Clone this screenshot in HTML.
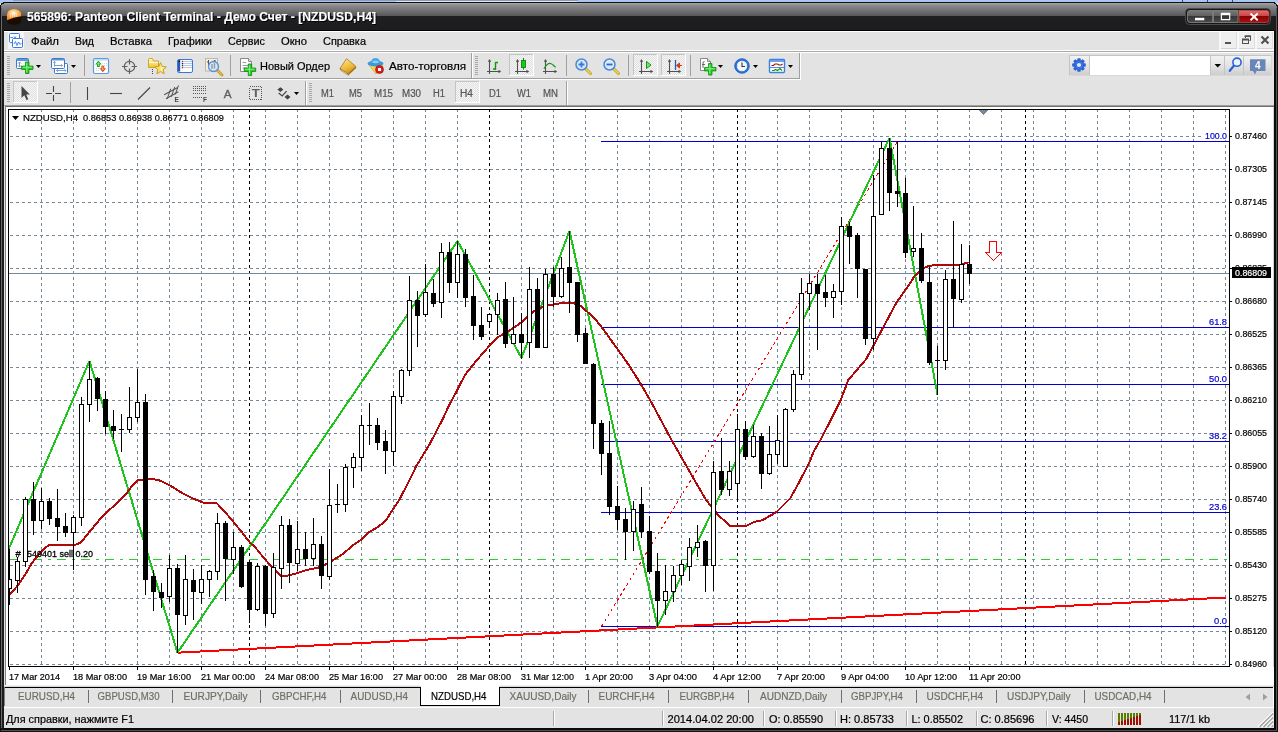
<!DOCTYPE html>
<html lang="ru"><head><meta charset="utf-8"><title>565896: Panteon Client Terminal - Демо Счет - [NZDUSD,H4]</title>
<style>
html,body{margin:0;padding:0;background:#e3e3e3;overflow:hidden}
body{width:1278px;height:732px;position:relative;font-family:'Liberation Sans', sans-serif}
svg{display:block;position:absolute;left:0;top:0;will-change:transform}
text{font-family:'Liberation Sans', sans-serif;white-space:pre}
</style></head>
<body>
<svg id="app" width="1278" height="732" viewBox="0 0 1278 732" font-family="'Liberation Sans', sans-serif" shape-rendering="crispEdges">
<g id="titlebar">
<defs>
<linearGradient id="tg" x1="0" y1="0" x2="0" y2="1"><stop offset="0" stop-color="#a8a8a8"/><stop offset="0.08" stop-color="#8c8c8e"/><stop offset="0.46" stop-color="#58585a"/><stop offset="0.461" stop-color="#1f1f21"/><stop offset="1" stop-color="#1c1c1e"/></linearGradient>
<linearGradient id="bg1" x1="0" y1="0" x2="0" y2="1"><stop offset="0" stop-color="#787878"/><stop offset="0.48" stop-color="#5e5e5e"/><stop offset="0.5" stop-color="#363636"/><stop offset="1" stop-color="#4a4a4a"/></linearGradient>
<linearGradient id="bg2" x1="0" y1="0" x2="0" y2="1"><stop offset="0" stop-color="#e46a6a"/><stop offset="0.48" stop-color="#c84444"/><stop offset="0.5" stop-color="#8a0000"/><stop offset="1" stop-color="#a41414"/></linearGradient>
<radialGradient id="orb" cx="0.45" cy="0.35" r="0.6"><stop offset="0" stop-color="#fff"/><stop offset="0.45" stop-color="#fcc070"/><stop offset="1" stop-color="#f78a20"/></radialGradient>
</defs>
<rect x="0" y="0" width="1278" height="3" fill="#a9c6f2"/>
<rect x="13" y="0" width="565" height="1" fill="#8c9cb6"/>
<rect x="396" y="1" width="181" height="1" fill="#dfe6f2"/>
<rect x="1182" y="0" width="1" height="2" fill="#3a4a70"/><rect x="1207" y="0" width="1" height="2" fill="#3a4a70"/><rect x="1232" y="0" width="1" height="2" fill="#3a4a70"/>
<path d="M0 732V8Q0 2 6 2H1272Q1278 2 1278 8V732Z" fill="#111"/>
<path d="M1 31V8Q1 3 6 3H1272Q1277 3 1277 8V31Z" fill="url(#tg)"/>
<rect x="1" y="8" width="1" height="720" fill="#6a6a6c"/>
<rect x="2" y="16" width="2" height="712" fill="#1c1c1e"/>
<rect x="1274" y="16" width="3" height="712" fill="#1c1c1e"/>
<rect x="4" y="30" width="1270" height="1" fill="#000"/>
<rect x="1276" y="8" width="1" height="723" fill="#555557"/>
<rect x="1" y="730" width="1276" height="1" fill="#505052"/>
<rect x="1274" y="31" width="2" height="699" fill="#0a0a0a"/>
<rect x="4" y="728" width="1272" height="2" fill="#0a0a0a"/>
<g shape-rendering="auto"><path d="M7 20.500V14.500Q7 9 14 9Q21.300 9 21.300 14.500V20.500Q21.300 24.700 14 24.700Q7 24.700 7 20.500Z" fill="#1c0c00"/><path d="M7 20V14.500Q7 9 14 9Q21.300 9 21.300 14.500V16.200Q13 17.200 7 20.300Z" fill="url(#orb)"/><path d="M10.500 13V17.500M12.500 12.500V17M14.500 12.300V16.600M16.500 12.500V16.300" stroke="#fff" stroke-opacity="0.55" stroke-width="0.8"/></g>
<g shape-rendering="auto"><text x="28" y="22" font-size="12" fill="#000" textLength="349" lengthAdjust="spacingAndGlyphs" font-weight="bold">565896: Panteon Client Terminal - Демо Счет - [NZDUSD,H4]</text><text x="27" y="21" font-size="12" fill="#fff" stroke="#fff" stroke-width="0.15" textLength="349" lengthAdjust="spacingAndGlyphs" font-weight="bold">565896: Panteon Client Terminal - Демо Счет - [NZDUSD,H4]</text></g>
<g shape-rendering="auto">
<rect x="1185.5" y="8.5" width="85" height="16" rx="4" fill="#161616" stroke="#4c4c4e"/>
<path d="M1190 10.5H1212.5V22.5H1190Q1187.500 22.500 1187.500 20V13Q1187.500 10.500 1190 10.500Z" fill="url(#bg1)" stroke="#8a8a8a" stroke-width="0.8"/>
<rect x="1213.500" y="10.500" width="24.500" height="12" fill="url(#bg1)" stroke="#8a8a8a" stroke-width="0.8"/>
<path d="M1239 10.500H1266.500Q1269 10.500 1269 13V20Q1269 22.500 1266.500 22.500H1239Z" fill="url(#bg2)" stroke="#c06060" stroke-width="0.6"/>
<rect x="1195" y="17.800" width="9.300" height="2.500" fill="#fff"/>
<path d="M1220.800 12.800H1230.300V20.200H1220.800ZM1222 15V19H1229.100V15Z" fill="#fff" fill-rule="evenodd"/>
<path d="M1250.500 13.500L1257.700 20.200M1257.700 13.500L1250.500 20.200" stroke="#fff" stroke-width="1.9"/>
</g>
</g>
<g id="menubar">
<rect x="4" y="31" width="1270" height="76" fill="#e3e3e3"/>
<rect x="4" y="31" width="1270" height="1" fill="#fff"/>
<rect x="4" y="50" width="1270" height="1" fill="#fff"/>
<rect x="4" y="51" width="1270" height="1" fill="#a8a8a8"/>
<rect x="4" y="52" width="1270" height="1" fill="#fff"/>
<g shape-rendering="auto">
<text x="31" y="45" font-size="11" fill="#000" stroke="#000" stroke-width="0.2" textLength="28" lengthAdjust="spacingAndGlyphs">Файл</text>
<text x="75" y="45" font-size="11" fill="#000" stroke="#000" stroke-width="0.2" textLength="19" lengthAdjust="spacingAndGlyphs">Вид</text>
<text x="110" y="45" font-size="11" fill="#000" stroke="#000" stroke-width="0.2" textLength="42" lengthAdjust="spacingAndGlyphs">Вставка</text>
<text x="168" y="45" font-size="11" fill="#000" stroke="#000" stroke-width="0.2" textLength="44" lengthAdjust="spacingAndGlyphs">Графики</text>
<text x="228" y="45" font-size="11" fill="#000" stroke="#000" stroke-width="0.2" textLength="37" lengthAdjust="spacingAndGlyphs">Сервис</text>
<text x="281" y="45" font-size="11" fill="#000" stroke="#000" stroke-width="0.2" textLength="26" lengthAdjust="spacingAndGlyphs">Окно</text>
<text x="323" y="45" font-size="11" fill="#000" stroke="#000" stroke-width="0.2" textLength="43" lengthAdjust="spacingAndGlyphs">Справка</text>
</g>
<g shape-rendering="auto"><rect x="8" y="32" width="16" height="17" fill="#f4f4f4"/><rect x="9.5" y="33.5" width="10" height="9" rx="1" fill="#fff" stroke="#3a7ae0"/><rect x="12.5" y="38.5" width="10" height="9" rx="1" fill="#fff" stroke="#3a7ae0"/><path d="M14 44L15.5 41.5L17 45.5L18.5 42L20 44.5L21.5 43" stroke="#3a7ae0" stroke-width="0.9" fill="none"/><path d="M10.5 37.5H13M14 36.5L15 38L16 36.5" stroke="#3a7ae0" stroke-width="0.9" fill="none"/></g>
<g shape-rendering="auto">
<rect x="1219" y="32" width="55" height="18" fill="#f8f8f8"/>
<rect x="1221" y="32" width="16" height="17" fill="#efefef"/><rect x="1221" y="48" width="16" height="1" fill="#d4d4d4"/><rect x="1236" y="32" width="1" height="17" fill="#dcdcdc"/>
<rect x="1239" y="32" width="16" height="17" fill="#efefef"/><rect x="1239" y="48" width="16" height="1" fill="#d4d4d4"/><rect x="1254" y="32" width="1" height="17" fill="#dcdcdc"/>
<rect x="1257" y="32" width="16" height="17" fill="#efefef"/><rect x="1257" y="48" width="16" height="1" fill="#d4d4d4"/><rect x="1272" y="32" width="1" height="17" fill="#dcdcdc"/>
<rect x="1225" y="42" width="6" height="2" fill="#555"/>
<path d="M1245.500 38V36H1250.500V40.500H1249.500" fill="none" stroke="#505050" stroke-width="1"/><rect x="1244.500" y="35.500" width="6.500" height="1.500" fill="#505050"/><rect x="1242.500" y="39.500" width="6" height="4" fill="none" stroke="#505050"/><rect x="1242" y="38.500" width="7" height="2" fill="#505050"/>
<path d="M1261.500 36.500L1268.500 43.500M1268.500 36.500L1261.500 43.500" stroke="#505050" stroke-width="2.100"/>
</g>
</g>
<g id="toolbars">
<defs><pattern id="chk" width="2" height="2" patternUnits="userSpaceOnUse"><rect width="2" height="2" fill="#f6f6f6"/><rect width="1" height="1" fill="#e0e0e0"/><rect x="1" y="1" width="1" height="1" fill="#e0e0e0"/></pattern></defs>
<rect x="4" y="78" width="796" height="1" fill="#a0a0a0"/>
<rect x="4" y="79" width="797" height="1" fill="#fff"/>
<rect x="471" y="53" width="1" height="25" fill="#a0a0a0"/><rect x="472" y="53" width="1" height="25" fill="#fff"/>
<rect x="799" y="53" width="1" height="26" fill="#a0a0a0"/><rect x="800" y="53" width="1" height="27" fill="#fff"/>
<rect x="4" y="105" width="1270" height="1" fill="#a0a0a0"/>
<rect x="305" y="81" width="1" height="24" fill="#a0a0a0"/><rect x="306" y="81" width="1" height="24" fill="#fff"/>
<rect x="566" y="81" width="1" height="24" fill="#a0a0a0"/><rect x="567" y="81" width="1" height="24" fill="#fff"/>
<rect x="7" y="56" width="3" height="1" fill="#a8a8a8"/><rect x="7" y="58" width="3" height="1" fill="#a8a8a8"/><rect x="7" y="60" width="3" height="1" fill="#a8a8a8"/><rect x="7" y="62" width="3" height="1" fill="#a8a8a8"/><rect x="7" y="64" width="3" height="1" fill="#a8a8a8"/><rect x="7" y="66" width="3" height="1" fill="#a8a8a8"/><rect x="7" y="68" width="3" height="1" fill="#a8a8a8"/><rect x="7" y="70" width="3" height="1" fill="#a8a8a8"/><rect x="7" y="72" width="3" height="1" fill="#a8a8a8"/><rect x="7" y="74" width="3" height="1" fill="#a8a8a8"/>
<rect x="475" y="56" width="3" height="1" fill="#a8a8a8"/><rect x="475" y="58" width="3" height="1" fill="#a8a8a8"/><rect x="475" y="60" width="3" height="1" fill="#a8a8a8"/><rect x="475" y="62" width="3" height="1" fill="#a8a8a8"/><rect x="475" y="64" width="3" height="1" fill="#a8a8a8"/><rect x="475" y="66" width="3" height="1" fill="#a8a8a8"/><rect x="475" y="68" width="3" height="1" fill="#a8a8a8"/><rect x="475" y="70" width="3" height="1" fill="#a8a8a8"/><rect x="475" y="72" width="3" height="1" fill="#a8a8a8"/><rect x="475" y="74" width="3" height="1" fill="#a8a8a8"/>
<rect x="7" y="83" width="3" height="1" fill="#a8a8a8"/><rect x="7" y="85" width="3" height="1" fill="#a8a8a8"/><rect x="7" y="87" width="3" height="1" fill="#a8a8a8"/><rect x="7" y="89" width="3" height="1" fill="#a8a8a8"/><rect x="7" y="91" width="3" height="1" fill="#a8a8a8"/><rect x="7" y="93" width="3" height="1" fill="#a8a8a8"/><rect x="7" y="95" width="3" height="1" fill="#a8a8a8"/><rect x="7" y="97" width="3" height="1" fill="#a8a8a8"/><rect x="7" y="99" width="3" height="1" fill="#a8a8a8"/><rect x="7" y="101" width="3" height="1" fill="#a8a8a8"/>
<rect x="309" y="83" width="3" height="1" fill="#a8a8a8"/><rect x="309" y="85" width="3" height="1" fill="#a8a8a8"/><rect x="309" y="87" width="3" height="1" fill="#a8a8a8"/><rect x="309" y="89" width="3" height="1" fill="#a8a8a8"/><rect x="309" y="91" width="3" height="1" fill="#a8a8a8"/><rect x="309" y="93" width="3" height="1" fill="#a8a8a8"/><rect x="309" y="95" width="3" height="1" fill="#a8a8a8"/><rect x="309" y="97" width="3" height="1" fill="#a8a8a8"/><rect x="309" y="99" width="3" height="1" fill="#a8a8a8"/><rect x="309" y="101" width="3" height="1" fill="#a8a8a8"/>
<rect x="84" y="55" width="1" height="21" fill="#a0a0a0"/>
<rect x="230" y="55" width="1" height="21" fill="#a0a0a0"/>
<rect x="566" y="55" width="1" height="21" fill="#a0a0a0"/>
<rect x="628" y="55" width="1" height="21" fill="#a0a0a0"/>
<rect x="690" y="55" width="1" height="21" fill="#a0a0a0"/>
<rect x="70" y="82" width="1" height="21" fill="#a0a0a0"/>
<rect x="509" y="54" width="25" height="22" fill="url(#chk)"/><rect x="509" y="54" width="25" height="1" fill="#c4c4c4"/><rect x="509" y="54" width="1" height="22" fill="#c4c4c4"/><rect x="509" y="75" width="25" height="1" fill="#fff"/><rect x="533" y="54" width="1" height="22" fill="#fff"/>
<rect x="633" y="54" width="25" height="22" fill="url(#chk)"/><rect x="633" y="54" width="25" height="1" fill="#c4c4c4"/><rect x="633" y="54" width="1" height="22" fill="#c4c4c4"/><rect x="633" y="75" width="25" height="1" fill="#fff"/><rect x="657" y="54" width="1" height="22" fill="#fff"/>
<rect x="661" y="54" width="25" height="22" fill="url(#chk)"/><rect x="661" y="54" width="25" height="1" fill="#c4c4c4"/><rect x="661" y="54" width="1" height="22" fill="#c4c4c4"/><rect x="661" y="75" width="25" height="1" fill="#fff"/><rect x="685" y="54" width="1" height="22" fill="#fff"/>
<rect x="13" y="81" width="25" height="22" fill="url(#chk)"/><rect x="13" y="81" width="25" height="1" fill="#c4c4c4"/><rect x="13" y="81" width="1" height="22" fill="#c4c4c4"/><rect x="13" y="102" width="25" height="1" fill="#fff"/><rect x="37" y="81" width="1" height="22" fill="#fff"/>
<rect x="455" y="81" width="25" height="22" fill="url(#chk)"/><rect x="455" y="81" width="25" height="1" fill="#c4c4c4"/><rect x="455" y="81" width="1" height="22" fill="#c4c4c4"/><rect x="455" y="102" width="25" height="1" fill="#fff"/><rect x="479" y="81" width="1" height="22" fill="#fff"/>
<path d="M36 65H41L38.5 68Z" fill="#000" shape-rendering="auto"/>
<path d="M71 65H76L73.5 68Z" fill="#000" shape-rendering="auto"/>
<path d="M718 65H723L720.5 68Z" fill="#000" shape-rendering="auto"/>
<path d="M753 65H758L755.5 68Z" fill="#000" shape-rendering="auto"/>
<path d="M788 65H793L790.5 68Z" fill="#000" shape-rendering="auto"/>
<path d="M294 92H299L296.5 95Z" fill="#000" shape-rendering="auto"/>
<g shape-rendering="auto">
<text x="260" y="70" font-size="11" fill="#000" stroke="#000" stroke-width="0.2" textLength="70" lengthAdjust="spacingAndGlyphs">Новый Ордер</text>
<text x="389" y="70" font-size="11" fill="#000" stroke="#000" stroke-width="0.2" textLength="77" lengthAdjust="spacingAndGlyphs">Авто-торговля</text>
<text x="321" y="97" font-size="10" fill="#555" stroke="#555" stroke-width="0.2" textLength="13" lengthAdjust="spacingAndGlyphs">M1</text>
<text x="349" y="97" font-size="10" fill="#555" stroke="#555" stroke-width="0.2" textLength="13" lengthAdjust="spacingAndGlyphs">M5</text>
<text x="374" y="97" font-size="10" fill="#555" stroke="#555" stroke-width="0.2" textLength="19" lengthAdjust="spacingAndGlyphs">M15</text>
<text x="402" y="97" font-size="10" fill="#555" stroke="#555" stroke-width="0.2" textLength="19" lengthAdjust="spacingAndGlyphs">M30</text>
<text x="433" y="97" font-size="10" fill="#555" stroke="#555" stroke-width="0.2" textLength="12" lengthAdjust="spacingAndGlyphs">H1</text>
<text x="460" y="97" font-size="10" fill="#555" stroke="#555" stroke-width="0.2" textLength="13" lengthAdjust="spacingAndGlyphs">H4</text>
<text x="489" y="97" font-size="10" fill="#555" stroke="#555" stroke-width="0.2" textLength="12" lengthAdjust="spacingAndGlyphs">D1</text>
<text x="517" y="97" font-size="10" fill="#555" stroke="#555" stroke-width="0.2" textLength="14" lengthAdjust="spacingAndGlyphs">W1</text>
<text x="543" y="97" font-size="10" fill="#555" stroke="#555" stroke-width="0.2" textLength="15" lengthAdjust="spacingAndGlyphs">MN</text>
</g>
<defs><linearGradient id="sb" x1="0" y1="0" x2="0" y2="1"><stop offset="0" stop-color="#f2f2f2"/><stop offset="0.5" stop-color="#e4e4e4"/><stop offset="1" stop-color="#cecece"/></linearGradient></defs>
<rect x="1069" y="55" width="203" height="21" fill="#c4c4c4"/>
<rect x="1070" y="56" width="19" height="19" fill="url(#sb)"/>
<rect x="1090" y="56" width="120" height="19" fill="#fff"/>
<rect x="1211" y="56" width="13" height="19" fill="url(#sb)"/>
<rect x="1225" y="56" width="18" height="19" fill="url(#sb)"/>
<rect x="1244" y="56" width="27" height="19" fill="url(#sb)"/>
<rect x="1069" y="75" width="203" height="1" fill="#d8d8d8"/><rect x="1271" y="55" width="1" height="21" fill="#d8d8d8"/>
<path d="M1214.500 64H1221L1217.750 67.500Z" fill="#000" shape-rendering="auto"/>
<g shape-rendering="auto">
<rect x="16.5" y="58.5" width="12" height="10" rx="1" fill="#fff" stroke="#3a78c8"/><rect x="17" y="59" width="11" height="2" fill="#5a98e0"/><path d="M19.5 62V67M18 63.5L19.5 62L21 63.5M18 65.5L19.5 67L21 65.5" stroke="#6a8ab0" stroke-width="0.9" fill="none"/>
<path d="M25.55 62H28.95V66.05H33.0V69.45H28.95V73.5H25.55V69.45H21.5V66.05H25.55Z" fill="#2ccc2c" stroke="#0a8a0a" stroke-width="0.8"/><path d="M26.75 63.2V72.3M22.7 67.25H31.8" stroke="#8af08a" stroke-width="1" fill="none"/>
<rect x="54.500" y="63.500" width="13" height="10" rx="1" fill="#fff" stroke="#3a78c8"/><path d="M56.500 70.500H66M57.800 69.200L56.500 70.500L57.800 71.800M64.700 69.200L66 70.500L64.700 71.800" stroke="#6a94c8" stroke-width="0.9" fill="none"/><rect x="51.500" y="58.500" width="13" height="10" rx="1" fill="#fff" stroke="#3a78c8"/><rect x="52" y="59" width="12" height="1.500" fill="#5a98e0"/><path d="M54.500 61.500V66.500M53.300 62.700L54.500 61.500L55.700 62.700M54.500 65.500H62.500M61.300 64.300L62.500 65.500L61.300 66.700" stroke="#6a94c8" stroke-width="0.9" fill="none"/>
<rect x="93.500" y="58.500" width="15" height="15" rx="1.500" fill="#fff" stroke="#5a9ae4" stroke-width="1.2"/><rect x="94.200" y="59.200" width="13.600" height="1.300" fill="#b0d0f8"/><path d="M102 63.500H107M102 65.500H107M96 68.500H100M96 70.500H100" stroke="#c8c8c8" stroke-width="0.8" stroke-dasharray="1 1"/><path d="M98.400 60.700L101.700 64.400H99.800V67H97V64.400H95.100Z" fill="#1aa81a"/><path d="M98.400 62.300L100 64H98.900V66H97.900V64H96.800Z" fill="#8ae88a"/><path d="M102.800 72.200L106.100 68.300H104.200V65.700H101.400V68.300H99.500Z" fill="#e04818"/><path d="M102.800 70.600L104.400 68.800H103.300V66.600H102.300V68.800H101.200Z" fill="#f8a888"/>
<circle cx="129.500" cy="66.500" r="5.200" fill="none" stroke="#606060" stroke-width="1.2"/><path d="M129.500 59V64.500M129.500 68.500V74M122 66.500H127.500M131.500 66.500H137" stroke="#606060" stroke-width="1.2"/>
<defs><linearGradient id="fold" x1="0" y1="0" x2="0" y2="1"><stop offset="0" stop-color="#fff8c8"/><stop offset="1" stop-color="#f2c230"/></linearGradient></defs>
<path d="M148.500 60V67.500H158.500V61H153.500L152.500 58.500H149.500Q148.500 58.500 148.500 60Z" fill="url(#fold)" stroke="#c8a020" stroke-width="0.9"/><path d="M149 62.500H158" stroke="#fffbe0" stroke-width="1"/><path d="M152.500 69V75" stroke="#444" stroke-width="1" stroke-dasharray="1 1" shape-rendering="crispEdges"/><path d="M160.500 62.500L162.200 66.500L166.300 66.900L163.200 69.700L164.200 73.800L160.500 71.600L156.800 73.800L157.800 69.700L154.700 66.900L158.800 66.500Z" fill="#f8e070" stroke="#c89818" stroke-width="0.9"/><path d="M160.500 64.500L161.500 67.200L164 67.500L162 69.200L162.600 71.800L160.500 70.500Z" fill="#fdf4b0"/>
<rect x="177.500" y="59.500" width="15" height="13" rx="1.500" fill="#fff" stroke="#3a78d0" stroke-width="1"/><rect x="178" y="60" width="2.200" height="11.500" fill="#2a5ab8"/><path d="M183.500 61.500H192M183.500 63.500H192M183.500 65.500H192M183.500 67.500H192" stroke="#a8c4f0" stroke-width="0.9"/><rect x="178.700" y="60.800" width="1.200" height="1.200" fill="#000"/><rect x="181.800" y="60.800" width="1.400" height="1.400" fill="#e02020"/><rect x="181.800" y="62.900" width="1.400" height="1.400" fill="#222"/><rect x="181.800" y="64.900" width="1.400" height="1.400" fill="#2a4a2a"/><rect x="181.800" y="66.900" width="1.400" height="1.400" fill="#e02020"/>
<rect x="205.500" y="58.500" width="12" height="12.500" fill="#f2eee2" stroke="#c0b8a0"/><path d="M208.500 60V67M207 62H208.500M208.500 64.500H210M214.500 60V66M213 63H214.500M214.500 61H216" stroke="#555" stroke-width="1"/><path d="M217.500 70.500L222 75" stroke="#b88a10" stroke-width="2.8" stroke-linecap="round"/><path d="M217.500 70.500L222 75" stroke="#e8c850" stroke-width="1.200" stroke-linecap="round"/><circle cx="213.500" cy="66.500" r="5" fill="#d4e4f6" fill-opacity="0.8" stroke="#5a90d8" stroke-width="1.300"/><path d="M212 64V69M214.500 63.500V68.500" stroke="#8a9ab0" stroke-width="1.400"/>
<path d="M240.500 58.500H248.500L251.500 61.500V71.500H240.500Z" fill="#fff" stroke="#888"/><path d="M248.500 58.500V61.500H251.500" fill="#ddd" stroke="#888"/><path d="M242.500 62.500H246M242.500 65.500H249.500M242.500 68H247" stroke="#999" stroke-width="1"/>
<path d="M248.25 64H251.64999999999998V68.05H255.7V71.45H251.64999999999998V75.5H248.25V71.45H244.2V68.05H248.25Z" fill="#2ccc2c" stroke="#0a8a0a" stroke-width="0.8"/><path d="M249.45 65.2V74.3M245.39999999999998 69.25H254.5" stroke="#8af08a" stroke-width="1" fill="none"/>
<defs><linearGradient id="book" x1="0.2" y1="0" x2="0.7" y2="1"><stop offset="0" stop-color="#fae890"/><stop offset="0.6" stop-color="#ecb838"/><stop offset="1" stop-color="#c88818"/></linearGradient></defs>
<path d="M340 68.500L346.500 58.700L356 66.500L348 73.800Z" fill="url(#book)" stroke="#a87810" stroke-width="0.8"/><path d="M340 68.500L340.800 70.300L348.300 75.300L348 73.800Z" fill="#fff4c8" stroke="#8a5a10" stroke-width="0.6"/><path d="M348 73.800L356 66.500L356.300 68L348.300 75.300Z" fill="#a87010"/>
<path d="M368.500 64L376 74L383 66Z" fill="#f8d858" stroke="#d8a820" stroke-width="0.8"/><ellipse cx="375.500" cy="63.500" rx="8" ry="3" fill="#3a9ad8"/><path d="M371 63Q371 58 375.500 58Q380 58 380 63Z" fill="#4aa8e8"/><ellipse cx="375.500" cy="62" rx="3" ry="1.200" fill="#8ad0f8"/><circle cx="379.500" cy="69.500" r="4" fill="#d82020" stroke="#a00808" stroke-width="0.6"/><rect x="378" y="68" width="3" height="3" fill="#fff"/>
<path d="M489.5 60V74M487 71.5H500" stroke="#505050" stroke-width="1.1" fill="none"/><path d="M489.5 59L487.8 61.8H491.2Z" fill="#505050"/><path d="M501.2 71.5L498.5 69.8V73.2Z" fill="#505050"/>
<path d="M495.500 62V70M493 69H495.500M495.500 62.500H498" stroke="#0a9a0a" stroke-width="1.4" fill="none"/>
<path d="M517.5 60V74M515 71.5H528" stroke="#505050" stroke-width="1.1" fill="none"/><path d="M517.5 59L515.8 61.8H519.2Z" fill="#505050"/><path d="M529.2 71.5L526.5 69.8V73.2Z" fill="#505050"/>
<path d="M523.500 58V69.500" stroke="#0a8a0a" stroke-width="1"/><rect x="521.500" y="60.500" width="4" height="7" fill="#22c422" stroke="#0a8a0a" stroke-width="0.9"/>
<path d="M545.5 60V74M543 71.5H556" stroke="#505050" stroke-width="1.1" fill="none"/><path d="M545.5 59L543.8 61.8H547.2Z" fill="#505050"/><path d="M557.2 71.5L554.5 69.8V73.2Z" fill="#505050"/>
<path d="M544 68.600C546 65 548 63.300 550 63.300S553.500 65.500 555.700 67.300" stroke="#1a9a1a" stroke-width="1.2" fill="none"/>
<path d="M585 68L590.5 73.5" stroke="#c8a020" stroke-width="3" stroke-linecap="round"/><path d="M585 68L590.5 73.5" stroke="#f0d868" stroke-width="1.2" stroke-linecap="round"/><circle cx="581.5" cy="64.5" r="5.5" fill="#dceaf8" stroke="#4a8ad8" stroke-width="1.5"/><path d="M578.5 64.5H584.5M581.5 61.5V67.5" stroke="#3a7ad0" stroke-width="1.8"/>
<path d="M613 68L618.5 73.5" stroke="#c8a020" stroke-width="3" stroke-linecap="round"/><path d="M613 68L618.5 73.5" stroke="#f0d868" stroke-width="1.2" stroke-linecap="round"/><circle cx="609.5" cy="64.5" r="5.5" fill="#dceaf8" stroke="#4a8ad8" stroke-width="1.5"/><path d="M606.5 64.5H612.5" stroke="#2a6ac8" stroke-width="1.8"/>
<path d="M641.5 60V74M639 71.5H652" stroke="#505050" stroke-width="1.1" fill="none"/><path d="M641.5 59L639.8 61.8H643.2Z" fill="#505050"/><path d="M653.2 71.5L650.5 69.8V73.2Z" fill="#505050"/>
<path d="M646.500 61.500V68.500L651 65Z" fill="#7ae07a" stroke="#0a9a0a" stroke-width="1"/>
<path d="M669.5 60V74M667 71.5H680" stroke="#505050" stroke-width="1.1" fill="none"/><path d="M669.5 59L667.8 61.8H671.2Z" fill="#505050"/><path d="M681.2 71.5L678.5 69.8V73.2Z" fill="#505050"/>
<path d="M675.500 60V70" stroke="#1a60c0" stroke-width="1.3"/><path d="M676.500 65.500L679.500 63V68ZM679 65.500H682" fill="#d04010" stroke="#d04010" stroke-width="1"/>
<path d="M700.500 58.500H707.500L710.500 61.500V70.500H700.500Z" fill="#fff" stroke="#888"/><path d="M707.500 58.500V61.500H710.500" fill="#ddd" stroke="#888"/><path d="M704.500 61.500Q703 61.500 703 63V68" stroke="#666" stroke-width="1" fill="none"/><path d="M702 64.500H705" stroke="#666" stroke-width="1"/>
<path d="M708.55 63.5H711.95V67.55H716.0V70.95H711.95V75.0H708.55V70.95H704.5V67.55H708.55Z" fill="#2ccc2c" stroke="#0a8a0a" stroke-width="0.8"/><path d="M709.75 64.7V73.8M705.7 68.75H714.8" stroke="#8af08a" stroke-width="1" fill="none"/>
<circle cx="742" cy="66" r="7.300" fill="#2a78d8" stroke="#1a58b0" stroke-width="0.8"/><circle cx="742" cy="66" r="5.200" fill="#f4f6fa"/><path d="M742 62.500V66.500H745" stroke="#333" stroke-width="1.100" fill="none"/><path d="M742 61.500V62M742 70V70.500M737.500 66H738M746 66H746.500" stroke="#888" stroke-width="0.8"/>
<rect x="769.500" y="59.500" width="15" height="13" rx="1" fill="#fff" stroke="#3a80e0" stroke-width="1.4"/><rect x="770" y="60" width="14" height="2" fill="#6aa0f0"/><path d="M770 67.500H784" stroke="#3a80e0" stroke-width="0.9"/><path d="M771.500 65.500H773.500L775 64H777.500L779 65H781L782.500 64" stroke="#a01010" stroke-width="1.2" fill="none"/><path d="M772 70.500H774L775.500 69.500L777.500 70.500L780 68.500L782 70.500" stroke="#0a9a0a" stroke-width="1.2" fill="none"/>
<g transform="translate(1079,65)"><rect x="-1.700" y="-6.800" width="3.400" height="3.600" rx="0.900" transform="rotate(0)" fill="#2a62d8"/><rect x="-1.700" y="-6.800" width="3.400" height="3.600" rx="0.900" transform="rotate(45)" fill="#2a62d8"/><rect x="-1.700" y="-6.800" width="3.400" height="3.600" rx="0.900" transform="rotate(90)" fill="#2a62d8"/><rect x="-1.700" y="-6.800" width="3.400" height="3.600" rx="0.900" transform="rotate(135)" fill="#2a62d8"/><rect x="-1.700" y="-6.800" width="3.400" height="3.600" rx="0.900" transform="rotate(180)" fill="#2a62d8"/><rect x="-1.700" y="-6.800" width="3.400" height="3.600" rx="0.900" transform="rotate(225)" fill="#2a62d8"/><rect x="-1.700" y="-6.800" width="3.400" height="3.600" rx="0.900" transform="rotate(270)" fill="#2a62d8"/><rect x="-1.700" y="-6.800" width="3.400" height="3.600" rx="0.900" transform="rotate(315)" fill="#2a62d8"/><circle r="5" fill="#2a62d8"/><circle r="2.100" fill="#dfe6f4"/><circle r="3.300" fill="none" stroke="#5a8aea" stroke-width="0.700"/></g>
<path d="M1229.800 70.800L1234 65.500" stroke="#2a62d8" stroke-width="2.200" stroke-linecap="round"/><circle cx="1237" cy="62.200" r="4.100" fill="#eef3fc" stroke="#2a62d8" stroke-width="1.600"/>
<path d="M1250 59.300H1265.500V71H1256.500L1255 74.500L1253 71H1250Z" fill="#6a86b8"/>
<text x="1257.800" y="68.800" font-size="10" font-weight="bold" fill="#fff" text-anchor="middle">4</text>
<path d="M21.500 86V98L24.300 95.300L26.500 100L28.300 99.200L26.200 94.600H29.800Z" fill="#444"/>
<path d="M53.500 86V92M53.500 95V101M46 93.500H52M55 93.500H61" stroke="#444" stroke-width="1.1"/>
<path d="M87.500 87V100" stroke="#444" stroke-width="1.1"/><path d="M110 93.500H122" stroke="#444" stroke-width="1.1"/><path d="M138 99.500L150 87.500" stroke="#444" stroke-width="1.1"/>
<path d="M164.200 94.700L177.700 87.600M166 98.800L178.300 91.700" stroke="#555" stroke-width="1.1"/><path d="M167.200 98.800L170.700 88.800M171.200 97L174.700 87M175.200 94.500L178.500 85.300" stroke="#555" stroke-width="1"/>
<text x="174.600" y="101.700" font-size="6.500" font-weight="bold" fill="#444">E</text>
<path d="M193 86.500H206M193 88.500H206M193 90.500H206M193 93.500H206M193 97.500H202" stroke="#555" stroke-width="1" stroke-dasharray="1 1" shape-rendering="crispEdges"/>
<text x="203" y="101.700" font-size="6.500" font-weight="bold" fill="#444">F</text>
<text x="223.800" y="97.600" font-size="11.700" fill="#606060" stroke="#606060" stroke-width="0.35">A</text>
<rect x="249.500" y="86.500" width="12" height="13" fill="none" stroke="#555" stroke-width="1" stroke-dasharray="1 1" shape-rendering="crispEdges"/><text x="251.700" y="97.400" font-size="10.300" font-weight="bold" fill="#606060" textLength="8.200" lengthAdjust="spacingAndGlyphs">T</text>
<path d="M280.400 87.200L283.400 89.600L280.400 92L277.400 89.600Z M287.500 94.600L290.500 97L287.500 99.400L284.500 97Z" fill="#444"/><path d="M278.700 93L282.200 95.900L286.600 91.100" stroke="#444" stroke-width="1.200" fill="none"/>
</g>
</g>
<g id="chart">
<defs><clipPath id="cclip"><rect x="9" y="110" width="1220" height="556"/></clipPath></defs>
<rect x="4" y="106" width="1270" height="581" fill="#fff"/>
<rect x="4" y="105" width="1270" height="1" fill="#a0a0a0"/>
<rect x="4" y="106" width="1270" height="1" fill="#716f64"/>
<rect x="4" y="106" width="1" height="581" fill="#e3e3e3"/>
<rect x="5" y="106" width="1" height="580" fill="#808080"/>
<rect x="1273" y="107" width="1" height="580" fill="#d4d4d4"/>
<path d="M41.5 110V666M73.5 110V666M105.5 110V666M137.5 110V666M169.5 110V666M201.5 110V666M233.5 110V666M265.5 110V666M297.5 110V666M329.5 110V666M361.5 110V666M393.5 110V666M425.5 110V666M457.5 110V666M489.5 110V666M521.5 110V666M553.5 110V666M585.5 110V666M617.5 110V666M649.5 110V666M681.5 110V666M713.5 110V666M745.5 110V666M777.5 110V666M809.5 110V666M841.5 110V666M873.5 110V666M905.5 110V666M937.5 110V666M969.5 110V666M1001.5 110V666M1033.5 110V666M1065.5 110V666M1097.5 110V666M1129.5 110V666M1161.5 110V666M1193.5 110V666M1225.5 110V666" stroke="#778899" stroke-width="1" stroke-dasharray="3 3" stroke-dashoffset="1" fill="none"/>
<path d="M9 136.5H1227M9 169.5H1227M9 202.5H1227M9 235.5H1227M9 268.5H1227M9 301.5H1227M9 334.5H1227M9 367.5H1227M9 400.5H1227M9 433.5H1227M9 466.5H1227M9 499.5H1227M9 532.5H1227M9 565.5H1227M9 598.5H1227M9 631.5H1227M9 664.5H1227" stroke="#778899" stroke-width="1" stroke-dasharray="3 3" stroke-dashoffset="5" fill="none"/>
<path d="M249.5 110V666M489.5 110V666M737.5 110V666M1025.5 110V666" stroke="#000" stroke-width="1" stroke-dasharray="3 3" stroke-dashoffset="1" fill="none"/>
<rect x="9" y="273" width="1220" height="1" fill="#778899"/>
<g clip-path="url(#cclip)">
<rect x="601" y="141" width="628" height="1" fill="#0000cd"/>
<rect x="601" y="327" width="628" height="1" fill="#0000cd"/>
<rect x="601" y="384" width="628" height="1" fill="#0000cd"/>
<rect x="601" y="441" width="628" height="1" fill="#0000cd"/>
<rect x="601" y="512" width="628" height="1" fill="#0000cd"/>
<rect x="601" y="626" width="628" height="1" fill="#0000cd"/>
<line x1="601.5" y1="626.5" x2="897.5" y2="141.5" stroke="#ff0000" stroke-width="1" stroke-dasharray="3 3" shape-rendering="crispEdges"/>
<path d="M9 559.5H1229" stroke="#2ecc2e" stroke-width="1" stroke-dasharray="9 6 3 6" stroke-dashoffset="0" fill="none"/>
<line x1="177.5" y1="652.7" x2="1226" y2="597.5" stroke="#ff0000" stroke-width="2"/>
<polyline points="1,567 89.5,361 177.5,652.7 457.5,241 521.5,358 569.5,231 657.5,626.4 889.5,138 937.5,394.5" fill="none" stroke="#1cc41c" stroke-width="2" stroke-linejoin="bevel"/>
<polyline points="9,595.5 17.2,586.2 25.2,574.7 31,564.4 34.4,559.8 40.1,552.9 45.9,547.2 50,544.7 74.9,545.1 81.2,542.3 88.3,533.3 99.3,520 107.1,512.1 118.1,501.9 126,494.1 132.3,485.4 137.8,479.9 152.7,479.1 160.5,480.7 170,485.4 182.5,493.3 193.5,498.8 204.5,503 217.1,503.5 226.5,513.7 234.4,523.1 242.2,532.6 250.1,542.8 255,547 262.6,556.5 271.4,566.5 280.8,575.6 287.7,575.6 296.5,573.4 305.3,570.3 317.9,567.8 325.4,564.6 333,560.2 343,553.9 353.1,545.1 360.6,540.1 369.4,531.9 378.2,526.9 385.7,520.6 400,498.6 409,481 416.3,466.1 430.3,443 438,428 442.3,420 449.4,404.5 452.3,399.5 465.1,374.8 477.7,359.1 488.7,346.6 498.1,337.1 509.1,330.9 521.7,322.2 532.7,312 542.1,307.3 550,304.9 562.5,303 573.5,303 581.4,306.5 589.3,313.6 597.1,321.4 605,331.6 612.8,342.6 620.7,353.6 628.5,364.6 640,382.7 650.1,400 672.1,441 692.2,476.1 706.2,500.2 718.2,515.2 730.2,525.8 746.3,525.8 754.3,521.8 762.3,520.2 776.3,512.2 790.3,498.2 800.3,480.1 810.4,460.1 813.9,451 820.4,440 830.1,421.3 840.2,401.3 848.3,380 866.1,359.2 880.2,333.1 896.2,303 910.2,283 914.5,276 923,268.3 929.3,265.8 938.5,264.8 961,264.5 968.7,262.3" fill="none" stroke="#b00808" stroke-width="2" stroke-linejoin="round"/>
<text y="557" font-size="9.6" stroke="#000" stroke-width="0.3" fill="#000" shape-rendering="auto"><tspan x="15.5">#</tspan><tspan x="23.2">1</tspan><tspan x="27" textLength="66" lengthAdjust="spacingAndGlyphs">549401 sell 0.20</tspan></text>
<path d="M9 549h1v56h-1zM17 557h1v36h-1zM25 497h1v70h-1zM33 482h1v53h-1zM41 488h1v41h-1zM49 498h1v27h-1zM57 489h1v52h-1zM65 513h1v24h-1zM73 515h1v55h-1zM81 397h1v129h-1zM89 361h1v61h-1zM97 377h1v34h-1zM105 391h1v43h-1zM113 410h1v29h-1zM121 414h1v38h-1zM129 387h1v46h-1zM137 369h1v53h-1zM145 394h1v201h-1zM153 570h1v41h-1zM161 583h1v25h-1zM169 555h1v47h-1zM177 564h1v89h-1zM185 555h1v70h-1zM193 569h1v51h-1zM201 565h1v39h-1zM209 570h1v27h-1zM217 513h1v67h-1zM225 521h1v80h-1zM233 532h1v42h-1zM241 545h1v43h-1zM249 561h1v62h-1zM257 563h1v48h-1zM265 565h1v61h-1zM273 553h1v65h-1zM281 516h1v73h-1zM289 519h1v64h-1zM297 521h1v50h-1zM305 532h1v34h-1zM313 518h1v48h-1zM321 536h1v53h-1zM329 469h1v111h-1zM337 484h1v29h-1zM345 464h1v48h-1zM353 453h1v35h-1zM361 415h1v56h-1zM369 403h1v42h-1zM377 418h1v32h-1zM385 430h1v44h-1zM393 391h1v75h-1zM401 369h1v35h-1zM409 276h1v100h-1zM417 291h1v56h-1zM425 264h1v53h-1zM433 279h1v28h-1zM441 243h1v75h-1zM449 242h1v51h-1zM457 241h1v57h-1zM465 249h1v58h-1zM473 275h1v65h-1zM481 307h1v33h-1zM489 313h1v15h-1zM497 293h1v42h-1zM505 282h1v66h-1zM513 297h1v47h-1zM521 313h1v46h-1zM529 267h1v91h-1zM537 278h1v70h-1zM545 269h1v79h-1zM553 267h1v40h-1zM561 257h1v41h-1zM569 231h1v82h-1zM577 282h1v60h-1zM585 328h1v36h-1zM593 363h1v86h-1zM601 420h1v55h-1zM609 421h1v94h-1zM617 486h1v44h-1zM625 508h1v52h-1zM633 501h1v50h-1zM641 487h1v51h-1zM649 516h1v58h-1zM657 553h1v74h-1zM665 565h1v50h-1zM673 566h1v36h-1zM681 560h1v25h-1zM689 538h1v43h-1zM697 525h1v32h-1zM705 540h1v52h-1zM713 461h1v130h-1zM721 438h1v57h-1zM729 461h1v35h-1zM737 414h1v87h-1zM745 421h1v39h-1zM753 425h1v33h-1zM761 433h1v56h-1zM769 426h1v49h-1zM777 415h1v49h-1zM785 408h1v59h-1zM793 370h1v42h-1zM801 278h1v102h-1zM809 274h1v36h-1zM817 274h1v76h-1zM825 275h1v32h-1zM833 284h1v34h-1zM841 217h1v88h-1zM849 222h1v42h-1zM857 233h1v65h-1zM865 269h1v76h-1zM873 175h1v175h-1zM881 142h1v73h-1zM889 138h1v73h-1zM897 141h1v66h-1zM905 178h1v80h-1zM913 206h1v51h-1zM921 233h1v50h-1zM929 267h1v98h-1zM937 346h1v49h-1zM945 270h1v100h-1zM953 221h1v107h-1zM961 244h1v59h-1zM969 245h1v39h-1z" fill="#000"/>
<path d="M7 579h5v10h-5zM15 561h5v20h-5zM23 499h5v63h-5zM31 499h5v22h-5zM39 501h5v20h-5zM47 501h5v18h-5zM55 518h5v9h-5zM63 526h5v7h-5zM71 517h5v16h-5zM79 404h5v114h-5zM87 379h5v26h-5zM95 378h5v21h-5zM103 399h5v28h-5zM111 426h5v5h-5zM119 429h5v1h-5zM127 417h5v13h-5zM135 402h5v16h-5zM143 402h5v178h-5zM151 576h5v16h-5zM159 592h5v6h-5zM167 568h5v29h-5zM175 568h5v47h-5zM183 579h5v37h-5zM191 580h5v12h-5zM199 579h5v14h-5zM207 571h5v9h-5zM215 523h5v49h-5zM223 523h5v36h-5zM231 547h5v13h-5zM239 547h5v40h-5zM247 562h5v48h-5zM255 566h5v44h-5zM263 566h5v48h-5zM271 567h5v47h-5zM279 525h5v44h-5zM287 525h5v38h-5zM295 549h5v15h-5zM303 549h5v10h-5zM311 544h5v15h-5zM319 544h5v32h-5zM327 505h5v72h-5zM335 504h5v1h-5zM343 467h5v38h-5zM351 457h5v11h-5zM359 425h5v33h-5zM367 425h5v1h-5zM375 425h5v18h-5zM383 441h5v10h-5zM391 396h5v56h-5zM399 370h5v27h-5zM407 300h5v71h-5zM415 300h5v16h-5zM423 292h5v23h-5zM431 293h5v11h-5zM439 252h5v51h-5zM447 252h5v31h-5zM455 254h5v29h-5zM463 254h5v44h-5zM471 296h5v30h-5zM479 325h5v12h-5zM487 314h5v8h-5zM495 300h5v15h-5zM503 299h5v45h-5zM511 334h5v10h-5zM519 334h5v9h-5zM527 289h5v54h-5zM535 289h5v59h-5zM543 274h5v74h-5zM551 274h5v23h-5zM559 268h5v29h-5zM567 267h5v16h-5zM575 282h5v53h-5zM583 333h5v31h-5zM591 364h5v60h-5zM599 423h5v31h-5zM607 453h5v54h-5zM615 506h5v14h-5zM623 519h5v13h-5zM631 509h5v23h-5zM639 504h5v28h-5zM647 531h5v41h-5zM655 571h5v30h-5zM663 591h5v10h-5zM671 575h5v17h-5zM679 564h5v12h-5zM687 547h5v20h-5zM695 542h5v6h-5zM703 541h5v25h-5zM711 472h5v94h-5zM719 471h5v19h-5zM727 471h5v19h-5zM735 429h5v55h-5zM743 429h5v28h-5zM751 436h5v21h-5zM759 436h5v38h-5zM767 454h5v20h-5zM775 440h5v15h-5zM783 409h5v58h-5zM791 374h5v36h-5zM799 293h5v82h-5zM807 283h5v11h-5zM815 284h5v10h-5zM823 292h5v6h-5zM831 291h5v7h-5zM839 226h5v66h-5zM847 226h5v11h-5zM855 235h5v34h-5zM863 269h5v70h-5zM871 216h5v123h-5zM879 148h5v67h-5zM887 148h5v45h-5zM895 191h5v3h-5zM903 193h5v60h-5zM911 248h5v4h-5zM919 248h5v33h-5zM927 282h5v81h-5zM935 360h5v1h-5zM943 279h5v82h-5zM951 279h5v20h-5zM959 264h5v36h-5zM967 264h5v10h-5z" fill="#000"/>
<path d="M8 580h3v8h-3zM16 562h3v18h-3zM24 500h3v61h-3zM40 502h3v18h-3zM72 518h3v14h-3zM80 405h3v112h-3zM88 380h3v24h-3zM128 418h3v11h-3zM136 403h3v14h-3zM168 569h3v27h-3zM184 580h3v35h-3zM200 580h3v12h-3zM208 572h3v7h-3zM216 524h3v47h-3zM232 548h3v11h-3zM256 567h3v42h-3zM272 568h3v45h-3zM280 526h3v42h-3zM296 550h3v13h-3zM312 545h3v13h-3zM328 506h3v70h-3zM344 468h3v36h-3zM352 458h3v9h-3zM360 426h3v31h-3zM392 397h3v54h-3zM400 371h3v25h-3zM408 301h3v69h-3zM424 293h3v21h-3zM440 253h3v49h-3zM456 255h3v27h-3zM488 315h3v6h-3zM496 301h3v13h-3zM512 335h3v8h-3zM528 290h3v52h-3zM544 275h3v72h-3zM560 269h3v27h-3zM632 510h3v21h-3zM664 592h3v8h-3zM672 576h3v15h-3zM680 565h3v10h-3zM688 548h3v18h-3zM696 543h3v4h-3zM712 473h3v92h-3zM728 472h3v17h-3zM736 430h3v53h-3zM752 437h3v19h-3zM768 455h3v18h-3zM776 441h3v13h-3zM784 410h3v56h-3zM792 375h3v34h-3zM800 294h3v80h-3zM808 284h3v9h-3zM832 292h3v5h-3zM840 227h3v64h-3zM872 217h3v121h-3zM880 149h3v65h-3zM912 249h3v2h-3zM944 280h3v80h-3zM960 265h3v34h-3z" fill="#fff"/>
</g>
<path d="M989.5 241.5H996.5V252.5H1001.5L993.5 260.5L985.5 252.5H989.5Z" fill="none" stroke="#ff0000" stroke-width="1"/>
<path d="M979 110H988L983.5 115Z" fill="#778899"/>
<rect x="1230" y="107" width="43" height="579" fill="#fff"/>
<rect x="6" y="667" width="1268" height="19" fill="#fff"/>
<path d="M8.5 109.5H1229.5V666.5H8.5Z" fill="none" stroke="#000" stroke-width="1"/>
<g id="chart-labels" shape-rendering="auto">
<path d="M12 116H19L15.5 120Z" fill="#000"/>
<text x="23" y="121" font-size="9.6" fill="#000" stroke="#000" stroke-width="0.2" textLength="55" lengthAdjust="spacingAndGlyphs">NZDUSD,H4</text>
<text x="83" y="121" font-size="9.6" fill="#000" stroke="#000" stroke-width="0.2" textLength="141" lengthAdjust="spacingAndGlyphs">0.86853 0.86938 0.86771 0.86809</text>
<rect x="1230" y="136" width="2" height="1" fill="#000" shape-rendering="crispEdges"/>
<text x="1235" y="139.1" font-size="9.6" fill="#000" stroke="#000" stroke-width="0.2" textLength="32" lengthAdjust="spacingAndGlyphs">0.87460</text>
<rect x="1230" y="169" width="2" height="1" fill="#000" shape-rendering="crispEdges"/>
<text x="1235" y="172.1" font-size="9.6" fill="#000" stroke="#000" stroke-width="0.2" textLength="32" lengthAdjust="spacingAndGlyphs">0.87305</text>
<rect x="1230" y="202" width="2" height="1" fill="#000" shape-rendering="crispEdges"/>
<text x="1235" y="205.1" font-size="9.6" fill="#000" stroke="#000" stroke-width="0.2" textLength="32" lengthAdjust="spacingAndGlyphs">0.87145</text>
<rect x="1230" y="235" width="2" height="1" fill="#000" shape-rendering="crispEdges"/>
<text x="1235" y="238.1" font-size="9.6" fill="#000" stroke="#000" stroke-width="0.2" textLength="32" lengthAdjust="spacingAndGlyphs">0.86990</text>
<rect x="1230" y="268" width="2" height="1" fill="#000" shape-rendering="crispEdges"/>
<text x="1235" y="271.1" font-size="9.6" fill="#000" stroke="#000" stroke-width="0.2" textLength="32" lengthAdjust="spacingAndGlyphs">0.86835</text>
<rect x="1230" y="301" width="2" height="1" fill="#000" shape-rendering="crispEdges"/>
<text x="1235" y="304.1" font-size="9.6" fill="#000" stroke="#000" stroke-width="0.2" textLength="32" lengthAdjust="spacingAndGlyphs">0.86680</text>
<rect x="1230" y="334" width="2" height="1" fill="#000" shape-rendering="crispEdges"/>
<text x="1235" y="337.1" font-size="9.6" fill="#000" stroke="#000" stroke-width="0.2" textLength="32" lengthAdjust="spacingAndGlyphs">0.86525</text>
<rect x="1230" y="367" width="2" height="1" fill="#000" shape-rendering="crispEdges"/>
<text x="1235" y="370.1" font-size="9.6" fill="#000" stroke="#000" stroke-width="0.2" textLength="32" lengthAdjust="spacingAndGlyphs">0.86365</text>
<rect x="1230" y="400" width="2" height="1" fill="#000" shape-rendering="crispEdges"/>
<text x="1235" y="403.1" font-size="9.6" fill="#000" stroke="#000" stroke-width="0.2" textLength="32" lengthAdjust="spacingAndGlyphs">0.86210</text>
<rect x="1230" y="433" width="2" height="1" fill="#000" shape-rendering="crispEdges"/>
<text x="1235" y="436.1" font-size="9.6" fill="#000" stroke="#000" stroke-width="0.2" textLength="32" lengthAdjust="spacingAndGlyphs">0.86055</text>
<rect x="1230" y="466" width="2" height="1" fill="#000" shape-rendering="crispEdges"/>
<text x="1235" y="469.1" font-size="9.6" fill="#000" stroke="#000" stroke-width="0.2" textLength="32" lengthAdjust="spacingAndGlyphs">0.85900</text>
<rect x="1230" y="499" width="2" height="1" fill="#000" shape-rendering="crispEdges"/>
<text x="1235" y="502.1" font-size="9.6" fill="#000" stroke="#000" stroke-width="0.2" textLength="32" lengthAdjust="spacingAndGlyphs">0.85740</text>
<rect x="1230" y="532" width="2" height="1" fill="#000" shape-rendering="crispEdges"/>
<text x="1235" y="535.1" font-size="9.6" fill="#000" stroke="#000" stroke-width="0.2" textLength="32" lengthAdjust="spacingAndGlyphs">0.85585</text>
<rect x="1230" y="565" width="2" height="1" fill="#000" shape-rendering="crispEdges"/>
<text x="1235" y="568.1" font-size="9.6" fill="#000" stroke="#000" stroke-width="0.2" textLength="32" lengthAdjust="spacingAndGlyphs">0.85430</text>
<rect x="1230" y="598" width="2" height="1" fill="#000" shape-rendering="crispEdges"/>
<text x="1235" y="601.1" font-size="9.6" fill="#000" stroke="#000" stroke-width="0.2" textLength="32" lengthAdjust="spacingAndGlyphs">0.85275</text>
<rect x="1230" y="631" width="2" height="1" fill="#000" shape-rendering="crispEdges"/>
<text x="1235" y="634.1" font-size="9.6" fill="#000" stroke="#000" stroke-width="0.2" textLength="32" lengthAdjust="spacingAndGlyphs">0.85120</text>
<rect x="1230" y="664" width="2" height="1" fill="#000" shape-rendering="crispEdges"/>
<text x="1235" y="667.1" font-size="9.6" fill="#000" stroke="#000" stroke-width="0.2" textLength="32" lengthAdjust="spacingAndGlyphs">0.84960</text>
<rect x="1232" y="267" width="39" height="11" fill="#000" shape-rendering="crispEdges"/>
<text x="1235" y="276" font-size="9.6" fill="#fff" stroke="#fff" stroke-width="0.2" textLength="32" lengthAdjust="spacingAndGlyphs">0.86809</text>
<rect x="1204" y="131" width="24" height="9" fill="#fff" shape-rendering="crispEdges"/>
<text x="1227" y="139" font-size="9.6" fill="#0000cd" stroke="#0000cd" stroke-width="0.2" textLength="22" lengthAdjust="spacingAndGlyphs" text-anchor="end">100.0</text>
<rect x="1208" y="317" width="20" height="9" fill="#fff" shape-rendering="crispEdges"/>
<text x="1227" y="325" font-size="9.6" fill="#0000cd" stroke="#0000cd" stroke-width="0.2" textLength="18" lengthAdjust="spacingAndGlyphs" text-anchor="end">61.8</text>
<rect x="1208" y="374" width="20" height="9" fill="#fff" shape-rendering="crispEdges"/>
<text x="1227" y="382" font-size="9.6" fill="#0000cd" stroke="#0000cd" stroke-width="0.2" textLength="18" lengthAdjust="spacingAndGlyphs" text-anchor="end">50.0</text>
<rect x="1208" y="431" width="20" height="9" fill="#fff" shape-rendering="crispEdges"/>
<text x="1227" y="439" font-size="9.6" fill="#0000cd" stroke="#0000cd" stroke-width="0.2" textLength="18" lengthAdjust="spacingAndGlyphs" text-anchor="end">38.2</text>
<rect x="1208" y="502" width="20" height="9" fill="#fff" shape-rendering="crispEdges"/>
<text x="1227" y="510" font-size="9.6" fill="#0000cd" stroke="#0000cd" stroke-width="0.2" textLength="18" lengthAdjust="spacingAndGlyphs" text-anchor="end">23.6</text>
<rect x="1213" y="616" width="15" height="9" fill="#fff" shape-rendering="crispEdges"/>
<text x="1227" y="624" font-size="9.6" fill="#0000cd" stroke="#0000cd" stroke-width="0.2" textLength="13" lengthAdjust="spacingAndGlyphs" text-anchor="end">0.0</text>
<rect x="9" y="667" width="1" height="3" fill="#000" shape-rendering="crispEdges"/>
<text x="9" y="680" font-size="9.6" fill="#000" stroke="#000" stroke-width="0.2" textLength="51" lengthAdjust="spacingAndGlyphs">17 Mar 2014</text>
<rect x="73" y="667" width="1" height="3" fill="#000" shape-rendering="crispEdges"/>
<text x="73" y="680" font-size="9.6" fill="#000" stroke="#000" stroke-width="0.2" textLength="54" lengthAdjust="spacingAndGlyphs">18 Mar 08:00</text>
<rect x="137" y="667" width="1" height="3" fill="#000" shape-rendering="crispEdges"/>
<text x="137" y="680" font-size="9.6" fill="#000" stroke="#000" stroke-width="0.2" textLength="54" lengthAdjust="spacingAndGlyphs">19 Mar 16:00</text>
<rect x="201" y="667" width="1" height="3" fill="#000" shape-rendering="crispEdges"/>
<text x="201" y="680" font-size="9.6" fill="#000" stroke="#000" stroke-width="0.2" textLength="54" lengthAdjust="spacingAndGlyphs">21 Mar 00:00</text>
<rect x="265" y="667" width="1" height="3" fill="#000" shape-rendering="crispEdges"/>
<text x="265" y="680" font-size="9.6" fill="#000" stroke="#000" stroke-width="0.2" textLength="54" lengthAdjust="spacingAndGlyphs">24 Mar 08:00</text>
<rect x="329" y="667" width="1" height="3" fill="#000" shape-rendering="crispEdges"/>
<text x="329" y="680" font-size="9.6" fill="#000" stroke="#000" stroke-width="0.2" textLength="54" lengthAdjust="spacingAndGlyphs">25 Mar 16:00</text>
<rect x="393" y="667" width="1" height="3" fill="#000" shape-rendering="crispEdges"/>
<text x="393" y="680" font-size="9.6" fill="#000" stroke="#000" stroke-width="0.2" textLength="54" lengthAdjust="spacingAndGlyphs">27 Mar 00:00</text>
<rect x="457" y="667" width="1" height="3" fill="#000" shape-rendering="crispEdges"/>
<text x="457" y="680" font-size="9.6" fill="#000" stroke="#000" stroke-width="0.2" textLength="54" lengthAdjust="spacingAndGlyphs">28 Mar 08:00</text>
<rect x="521" y="667" width="1" height="3" fill="#000" shape-rendering="crispEdges"/>
<text x="521" y="680" font-size="9.6" fill="#000" stroke="#000" stroke-width="0.2" textLength="53" lengthAdjust="spacingAndGlyphs">31 Mar 12:00</text>
<rect x="585" y="667" width="1" height="3" fill="#000" shape-rendering="crispEdges"/>
<text x="585" y="680" font-size="9.6" fill="#000" stroke="#000" stroke-width="0.2" textLength="48" lengthAdjust="spacingAndGlyphs">1 Apr 20:00</text>
<rect x="649" y="667" width="1" height="3" fill="#000" shape-rendering="crispEdges"/>
<text x="649" y="680" font-size="9.6" fill="#000" stroke="#000" stroke-width="0.2" textLength="48" lengthAdjust="spacingAndGlyphs">3 Apr 04:00</text>
<rect x="713" y="667" width="1" height="3" fill="#000" shape-rendering="crispEdges"/>
<text x="713" y="680" font-size="9.6" fill="#000" stroke="#000" stroke-width="0.2" textLength="48" lengthAdjust="spacingAndGlyphs">4 Apr 12:00</text>
<rect x="777" y="667" width="1" height="3" fill="#000" shape-rendering="crispEdges"/>
<text x="777" y="680" font-size="9.6" fill="#000" stroke="#000" stroke-width="0.2" textLength="48" lengthAdjust="spacingAndGlyphs">7 Apr 20:00</text>
<rect x="841" y="667" width="1" height="3" fill="#000" shape-rendering="crispEdges"/>
<text x="841" y="680" font-size="9.6" fill="#000" stroke="#000" stroke-width="0.2" textLength="48" lengthAdjust="spacingAndGlyphs">9 Apr 04:00</text>
<rect x="905" y="667" width="1" height="3" fill="#000" shape-rendering="crispEdges"/>
<text x="905" y="680" font-size="9.6" fill="#000" stroke="#000" stroke-width="0.2" textLength="52" lengthAdjust="spacingAndGlyphs">10 Apr 12:00</text>
<rect x="969" y="667" width="1" height="3" fill="#000" shape-rendering="crispEdges"/>
<text x="969" y="680" font-size="9.6" fill="#000" stroke="#000" stroke-width="0.2" textLength="51.5" lengthAdjust="spacingAndGlyphs">11 Apr 20:00</text>
</g>
</g>
<g id="bottom">
<rect x="4" y="686" width="1270" height="42" fill="#e3e3e3"/>
<rect x="4" y="685" width="1270" height="1" fill="#f0f0f0"/>
<rect x="4" y="686" width="1270" height="1" fill="#d8d8d8"/>
<rect x="4" y="687" width="1270" height="1" fill="#000"/>
<rect x="4" y="687" width="1" height="19" fill="#808080"/>
<rect x="420" y="687" width="80" height="19" fill="#000"/>
<rect x="421" y="685" width="78" height="20" fill="#fff"/>
<rect x="4" y="707" width="1270" height="1" fill="#fff"/>
<g shape-rendering="auto">
<text x="18" y="700" font-size="11" fill="#6f6f66" stroke="#6f6f66" stroke-width="0.2" textLength="57" lengthAdjust="spacingAndGlyphs">EURUSD,H4</text>
<text x="97.5" y="700" font-size="11" fill="#6f6f66" stroke="#6f6f66" stroke-width="0.2" textLength="62" lengthAdjust="spacingAndGlyphs">GBPUSD,M30</text>
<text x="183.5" y="700" font-size="11" fill="#6f6f66" stroke="#6f6f66" stroke-width="0.2" textLength="64" lengthAdjust="spacingAndGlyphs">EURJPY,Daily</text>
<text x="272" y="700" font-size="11" fill="#6f6f66" stroke="#6f6f66" stroke-width="0.2" textLength="54.5" lengthAdjust="spacingAndGlyphs">GBPCHF,H4</text>
<text x="350.5" y="700" font-size="11" fill="#6f6f66" stroke="#6f6f66" stroke-width="0.2" textLength="57.5" lengthAdjust="spacingAndGlyphs">AUDUSD,H4</text>
<text x="509.5" y="700" font-size="11" fill="#6f6f66" stroke="#6f6f66" stroke-width="0.2" textLength="67" lengthAdjust="spacingAndGlyphs">XAUUSD,Daily</text>
<text x="598.5" y="700" font-size="11" fill="#6f6f66" stroke="#6f6f66" stroke-width="0.2" textLength="56" lengthAdjust="spacingAndGlyphs">EURCHF,H4</text>
<text x="679.5" y="700" font-size="11" fill="#6f6f66" stroke="#6f6f66" stroke-width="0.2" textLength="55" lengthAdjust="spacingAndGlyphs">EURGBP,H4</text>
<text x="760" y="700" font-size="11" fill="#6f6f66" stroke="#6f6f66" stroke-width="0.2" textLength="67" lengthAdjust="spacingAndGlyphs">AUDNZD,Daily</text>
<text x="851" y="700" font-size="11" fill="#6f6f66" stroke="#6f6f66" stroke-width="0.2" textLength="52" lengthAdjust="spacingAndGlyphs">GBPJPY,H4</text>
<text x="926.5" y="700" font-size="11" fill="#6f6f66" stroke="#6f6f66" stroke-width="0.2" textLength="56.5" lengthAdjust="spacingAndGlyphs">USDCHF,H4</text>
<text x="1007" y="700" font-size="11" fill="#6f6f66" stroke="#6f6f66" stroke-width="0.2" textLength="63.5" lengthAdjust="spacingAndGlyphs">USDJPY,Daily</text>
<text x="1094.5" y="700" font-size="11" fill="#6f6f66" stroke="#6f6f66" stroke-width="0.2" textLength="57" lengthAdjust="spacingAndGlyphs">USDCAD,H4</text>
<text x="431" y="700" font-size="11" fill="#000" stroke="#000" stroke-width="0.2" textLength="55.5" lengthAdjust="spacingAndGlyphs">NZDUSD,H4</text>
<rect x="88" y="690" width="1" height="13" fill="#6f6f66"/>
<rect x="172" y="690" width="1" height="13" fill="#6f6f66"/>
<rect x="260" y="690" width="1" height="13" fill="#6f6f66"/>
<rect x="340" y="690" width="1" height="13" fill="#6f6f66"/>
<rect x="588" y="690" width="1" height="13" fill="#6f6f66"/>
<rect x="668" y="690" width="1" height="13" fill="#6f6f66"/>
<rect x="748" y="690" width="1" height="13" fill="#6f6f66"/>
<rect x="841" y="690" width="1" height="13" fill="#6f6f66"/>
<rect x="916" y="690" width="1" height="13" fill="#6f6f66"/>
<rect x="996" y="690" width="1" height="13" fill="#6f6f66"/>
<rect x="1084" y="690" width="1" height="13" fill="#6f6f66"/>
<rect x="1164" y="690" width="1" height="13" fill="#6f6f66"/>
<path d="M1250 693.500L1245.500 697L1250 700.500Z" fill="#a0a0a0"/><path d="M1263 693.500L1267.500 697L1263 700.500Z" fill="#a0a0a0"/>
<text x="6" y="723" font-size="11" fill="#000" stroke="#000" stroke-width="0.2" textLength="128" lengthAdjust="spacingAndGlyphs">Для справки, нажмите F1</text>
<text x="667.5" y="723" font-size="11" fill="#000" stroke="#000" stroke-width="0.2" textLength="86.5" lengthAdjust="spacingAndGlyphs">2014.04.02 20:00</text>
<text x="769" y="723" font-size="11" fill="#000" stroke="#000" stroke-width="0.2" textLength="54" lengthAdjust="spacingAndGlyphs">O: 0.85590</text>
<text x="840" y="723" font-size="11" fill="#000" stroke="#000" stroke-width="0.2" textLength="54" lengthAdjust="spacingAndGlyphs">H: 0.85733</text>
<text x="911.5" y="723" font-size="11" fill="#000" stroke="#000" stroke-width="0.2" textLength="51.5" lengthAdjust="spacingAndGlyphs">L: 0.85502</text>
<text x="980.5" y="723" font-size="11" fill="#000" stroke="#000" stroke-width="0.2" textLength="54" lengthAdjust="spacingAndGlyphs">C: 0.85696</text>
<text x="1052" y="723" font-size="11" fill="#000" stroke="#000" stroke-width="0.2" textLength="36" lengthAdjust="spacingAndGlyphs">V: 4450</text>
<text x="1169" y="723" font-size="11" fill="#000" stroke="#000" stroke-width="0.2" textLength="41" lengthAdjust="spacingAndGlyphs">117/1 kb</text>
</g>
<rect x="553" y="711" width="1" height="15" fill="#a8a8a8"/><rect x="554" y="711" width="1" height="15" fill="#fff"/>
<rect x="662" y="711" width="1" height="15" fill="#a8a8a8"/><rect x="663" y="711" width="1" height="15" fill="#fff"/>
<rect x="763" y="711" width="1" height="15" fill="#a8a8a8"/><rect x="764" y="711" width="1" height="15" fill="#fff"/>
<rect x="835" y="711" width="1" height="15" fill="#a8a8a8"/><rect x="836" y="711" width="1" height="15" fill="#fff"/>
<rect x="906" y="711" width="1" height="15" fill="#a8a8a8"/><rect x="907" y="711" width="1" height="15" fill="#fff"/>
<rect x="976" y="711" width="1" height="15" fill="#a8a8a8"/><rect x="977" y="711" width="1" height="15" fill="#fff"/>
<rect x="1046" y="711" width="1" height="15" fill="#a8a8a8"/><rect x="1047" y="711" width="1" height="15" fill="#fff"/>
<rect x="1112" y="711" width="1" height="15" fill="#a8a8a8"/><rect x="1113" y="711" width="1" height="15" fill="#fff"/>
<rect x="1118" y="713" width="2" height="9" fill="#5a7a00"/><rect x="1118" y="722" width="2" height="3" fill="#a01000"/>
<rect x="1121" y="713" width="2" height="8" fill="#5a7a00"/><rect x="1121" y="721" width="2" height="4" fill="#a01000"/>
<rect x="1124" y="713" width="2" height="7" fill="#5a7a00"/><rect x="1124" y="720" width="2" height="5" fill="#a01000"/>
<rect x="1127" y="713" width="2" height="6" fill="#5a7a00"/><rect x="1127" y="719" width="2" height="6" fill="#a01000"/>
<rect x="1130" y="713" width="2" height="5" fill="#5a7a00"/><rect x="1130" y="718" width="2" height="7" fill="#a01000"/>
<rect x="1133" y="713" width="2" height="4" fill="#5a7a00"/><rect x="1133" y="717" width="2" height="8" fill="#a01000"/>
<rect x="1136" y="713" width="2" height="3" fill="#5a7a00"/><rect x="1136" y="716" width="2" height="9" fill="#a01000"/>
<rect x="1139" y="713" width="2" height="2" fill="#5a7a00"/><rect x="1139" y="715" width="2" height="10" fill="#a01000"/>
<path d="M1273 712L1258 727M1273 716L1262 727M1273 720L1266 727M1273 724L1270 727" stroke="#fff" stroke-width="1.2" shape-rendering="auto"/><path d="M1273 713.500L1259.500 727M1273 717.500L1263.500 727M1273 721.500L1267.500 727M1273 725.500L1271.500 727" stroke="#9a9a9a" stroke-width="1.200" shape-rendering="auto"/>
<rect x="1273" y="687" width="1" height="21" fill="#fff"/>
</g>
</svg>
</body></html>
